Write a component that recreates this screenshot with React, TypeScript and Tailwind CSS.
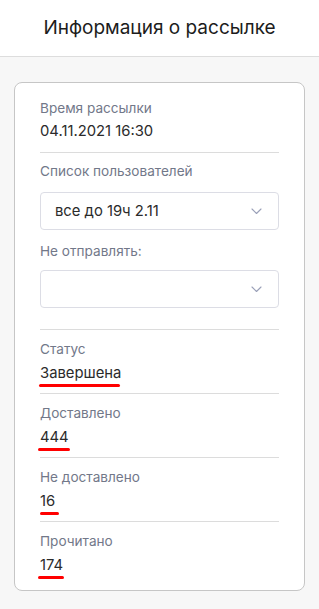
import React from "react";

function Chevron() {
  return (
    <svg width="11" height="7" viewBox="0 0 11 7" fill="none">
      <path d="M1 1l4.5 4.5L10 1" stroke="#9aa0b8" strokeWidth="1.1" strokeLinecap="round" strokeLinejoin="round" />
    </svg>
  );
}

function Select({ value }: { value?: string }) {
  return (
    <div className="h-[38px] rounded-[4px] border border-[#dcdde5] bg-white flex items-center justify-between pl-[14px] pr-[16px]">
      <span className="text-[14.8px] text-[#2b2b2b]">{value}</span>
      <Chevron />
    </div>
  );
}

function Stat({ label, value, mark, last }: { label: string; value: string; mark?: string; last?: boolean }) {
  return (
    <div className={"pt-[11px] " + (last ? "pb-[15px]" : "pb-[10px] border-b border-[#dcdcdc]")}>
      <div className="h-4 leading-4 text-[13.6px] text-[#727889]">{label}</div>
      <div className="relative mt-[6px] h-5 leading-5 text-[14.8px] text-[#2b2b2b]">
        {value}
        {mark && <div className={"absolute top-[21px] h-[3px] rounded-full bg-[#ff0000] " + mark} />}
      </div>
    </div>
  );
}

export default function App() {
  return (
    <div className="w-[319px] min-h-[609px] bg-[#f7f7f7]" style={{ fontFamily: "Inter, 'Noto Sans', sans-serif" }}>
      <header className="h-[57px] bg-white border-b border-[#dddddd] flex items-center justify-center">
        <h1 className="text-[19px] text-[#1c1c1c]">Информация о рассылке</h1>
      </header>
      <div className="px-[14px] pt-[25px] pb-[20px]">
        <div className="bg-white border border-[#c6c6c6] rounded-[8px] px-[25px]">
          <div className="pt-[17px] pb-[11px] border-b border-[#dcdcdc]">
            <div className="h-4 leading-4 text-[13.6px] text-[#727889]">Время рассылки</div>
            <div className="mt-[5px] h-5 leading-5 text-[14.8px] text-[#2b2b2b]">04.11.2021 16:30</div>
          </div>
          <div className="pt-[10px] pb-[21px] border-b border-[#dcdcdc]">
            <div className="h-4 leading-4 text-[13.6px] text-[#727889]">Список пользователей</div>
            <div className="mt-[13px]">
              <Select value="все до 19ч 2.11" />
            </div>
            <div className="mt-[13px] h-4 leading-4 text-[13.6px] text-[#727889]">Не отправлять:</div>
            <div className="mt-[11px]">
              <Select />
            </div>
          </div>
          <Stat label="Статус" value="Завершена" mark="-left-[1px] w-[81px]" />
          <Stat label="Доставлено" value="444" mark="-left-[2px] w-[32px]" />
          <Stat label="Не доставлено" value="16" mark="left-0 w-[19px]" />
          <Stat label="Прочитано" value="174" mark="-left-[2px] w-[26px]" last />
        </div>
      </div>
    </div>
  );
}
